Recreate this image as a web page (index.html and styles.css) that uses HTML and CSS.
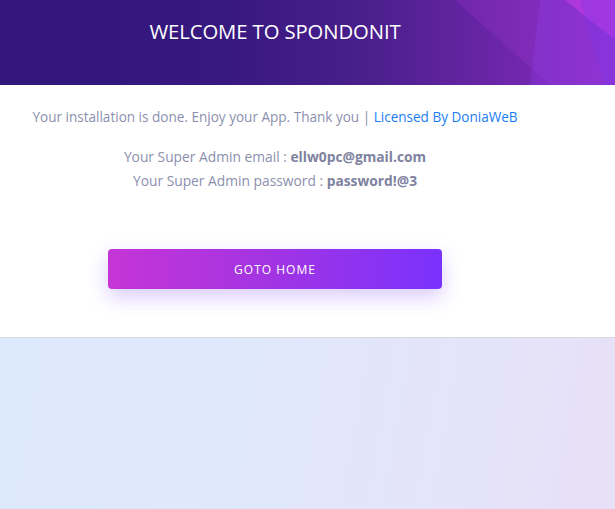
FILE: index.html
```html
<!DOCTYPE html>
<html>
<head>
<meta charset="utf-8">
<link rel="stylesheet" href="styles.css">
</head>
<body>
<header class="banner">
  <svg class="banner-shapes" viewBox="0 0 215 85" preserveAspectRatio="none" aria-hidden="true">
    <polygon points="55,0 215,0 215,85 150,85" fill="#b13ae0" opacity="0.2"/>
    <polygon points="140,0 215,0 215,85 130,85" fill="#8f3ef0" opacity="0.3"/>
    <polygon points="165,0 215,0 215,40" fill="#d23ee6" opacity="0.5"/>
    <polygon points="180,0 215,0 215,85 205,85" fill="#7a34f0" opacity="0.3"/>
  </svg>
  <div class="wrap">
    <h1 class="title">WELCOME TO SPONDONIT</h1>
  </div>
</header>
<main class="card">
  <div class="wrap">
    <p class="note">Your installation is done. Enjoy your App. Thank you | <a class="link" href="#">Licensed By DoniaWeB</a></p>
    <div class="creds">
      <p>Your Super Admin email : <strong>ellw0pc@gmail.com</strong></p>
      <p>Your Super Admin password : <strong>password!@3</strong></p>
    </div>
    <a class="btn" href="#">GOTO HOME</a>
  </div>
</main>
<section class="footer-bg"></section>
</body>
</html>
```
FILE: styles.css
```css
* { box-sizing: border-box; }
html, body { margin: 0; padding: 0; }
body {
  font-family: "Open Sans", "Liberation Sans", sans-serif;
  background: #fff;
  overflow: hidden;
  height: 509px;
  display: flex;
  flex-direction: column;
}
.wrap {
  width: 550px;
  display: flex;
  flex-direction: column;
  align-items: center;
}
.banner {
  position: relative;
  height: 85px;
  flex: none;
  background: linear-gradient(90deg, #32167a 0%, #36187e 35%, #4a1f8c 60%, #6a25a6 80%, #8a2cc4 100%);
  overflow: hidden;
}
.banner-shapes {
  position: absolute;
  right: 0;
  top: 0;
  width: 215px;
  height: 85px;
}
.banner .wrap { position: relative; }
.title {
  margin: 20px 0 0;
  font-weight: 400;
  font-size: 20.3px;
  line-height: 22px;
  color: #fff;
  letter-spacing: -0.1px;
}
.card {
  height: 253px;
  flex: none;
  background: #fff;
  border-bottom: 1px solid #d9d9e0;
}
.note {
  margin: 23px 0 0;
  font-size: 13.55px;
  line-height: 18px;
  color: #8b8fae;
}
.link { color: #1a7cf5; text-decoration: none; }
.creds {
  margin-top: 22px;
  display: flex;
  flex-direction: column;
  align-items: center;
  gap: 6px;
}
.creds p {
  margin: 0;
  font-size: 13.8px;
  line-height: 18px;
  color: #8b8fae;
}
.creds strong { color: #7e82a0; font-weight: 700; }
.btn {
  margin-top: 59px;
  width: 334px;
  height: 40px;
  border-radius: 4px;
  background: linear-gradient(90deg, #c535d6 0%, #a534e2 45%, #7a32fd 100%);
  box-shadow: 0 8px 20px rgba(123, 70, 255, 0.28);
  color: #fff;
  font-size: 12px;
  letter-spacing: 1px;
  text-decoration: none;
  display: flex;
  align-items: center;
  justify-content: center;
}
.footer-bg {
  flex: 1;
  background: linear-gradient(100deg, #dde9fd 0%, #e0e8fc 40%, #e4e4fa 70%, #e7e0f7 100%);
}
```
